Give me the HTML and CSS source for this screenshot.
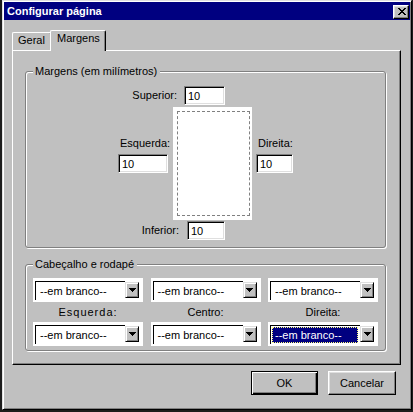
FILE: index.html
```html
<!DOCTYPE html>
<html lang="pt">
<head>
<meta charset="utf-8">
<title>Configurar página</title>
<link rel="stylesheet" href="styles.css">
</head>
<body>
<div class="dialog">
  <div class="titlebar">
    <span class="title">Configurar página</span>
    <span class="close" aria-label="Fechar">
      <svg width="8" height="7" viewBox="0 0 8 7" shape-rendering="crispEdges">
        <path fill="#000" d="M0 0h2v1h-2zM6 0h2v1h-2zM1 1h2v1h-2zM5 1h2v1h-2zM2 2h4v1h-4zM3 3h2v1h-2zM2 4h4v1h-4zM1 5h2v1h-2zM5 5h2v1h-2zM0 6h2v1h-2zM6 6h2v1h-2z"/>
      </svg>
    </span>
  </div>
  <div class="content">
    <div class="tabs">
      <div class="tab">Geral</div>
      <div class="tab active">Margens</div>
    </div>
    <div class="panel">
      <div class="group g1">
        <div class="legend">Margens (em milímetros)</div>
        <div class="row-end r-sup">
          <span class="lbl">Superior:</span>
          <span class="edit w41">10</span>
        </div>
        <div class="middle">
          <div class="side s-left">
            <span class="lbl">Esquerda:</span>
            <span class="edit">10</span>
          </div>
          <div class="page"><div class="page-inner"></div></div>
          <div class="side s-right">
            <span class="lbl">Direita:</span>
            <span class="edit">10</span>
          </div>
        </div>
        <div class="row-end r-inf">
          <span class="lbl">Inferior:</span>
          <span class="edit w38">10</span>
        </div>
      </div>
      <div class="group g2">
        <div class="legend">Cabeçalho e rodapé</div>
        <div class="combos">
          <div class="combo"><span class="field"><span class="val">--em branco--</span></span><span class="arrow"><svg width="7" height="4" viewBox="0 0 7 4" shape-rendering="crispEdges"><path fill="#000" d="M0 0h7v1h-7zM1 1h5v1h-5zM2 2h3v1h-3zM3 3h1v1h-1z"/></svg></span></div>
          <div class="combo"><span class="field"><span class="val">--em branco--</span></span><span class="arrow"><svg width="7" height="4" viewBox="0 0 7 4" shape-rendering="crispEdges"><path fill="#000" d="M0 0h7v1h-7zM1 1h5v1h-5zM2 2h3v1h-3zM3 3h1v1h-1z"/></svg></span></div>
          <div class="combo"><span class="field"><span class="val">--em branco--</span></span><span class="arrow"><svg width="7" height="4" viewBox="0 0 7 4" shape-rendering="crispEdges"><path fill="#000" d="M0 0h7v1h-7zM1 1h5v1h-5zM2 2h3v1h-3zM3 3h1v1h-1z"/></svg></span></div>
          <div class="clabel spaced">Esquerda:</div>
          <div class="clabel">Centro:</div>
          <div class="clabel">Direita:</div>
          <div class="combo"><span class="field"><span class="val">--em branco--</span></span><span class="arrow"><svg width="7" height="4" viewBox="0 0 7 4" shape-rendering="crispEdges"><path fill="#000" d="M0 0h7v1h-7zM1 1h5v1h-5zM2 2h3v1h-3zM3 3h1v1h-1z"/></svg></span></div>
          <div class="combo"><span class="field"><span class="val">--em branco--</span></span><span class="arrow"><svg width="7" height="4" viewBox="0 0 7 4" shape-rendering="crispEdges"><path fill="#000" d="M0 0h7v1h-7zM1 1h5v1h-5zM2 2h3v1h-3zM3 3h1v1h-1z"/></svg></span></div>
          <div class="combo focused"><span class="field"><span class="val sel">--em branco--</span></span><span class="arrow"><svg width="7" height="4" viewBox="0 0 7 4" shape-rendering="crispEdges"><path fill="#000" d="M0 0h7v1h-7zM1 1h5v1h-5zM2 2h3v1h-3zM3 3h1v1h-1z"/></svg></span></div>
        </div>
      </div>
    </div>
    <div class="buttons">
      <span class="btn default">OK</span>
      <span class="btn cancel">Cancelar</span>
    </div>
  </div>
</div>
</body>
</html>
```

FILE: styles.css
```css
* { box-sizing: border-box; }
html, body { margin: 0; padding: 0; }
body {
  background: #1c1c1c;
  width: 413px;
  height: 412px;
  overflow: hidden;
  font-family: "Liberation Sans", Arial, sans-serif;
  font-size: 11px;
  color: #000;
}
.dialog {
  margin-left: 2px;
  width: 410px;
  height: 410px;
  background: #c0c0c0;
  border: 1px solid;
  border-color: #dfdfdf #000 #000 #dfdfdf;
  box-shadow: inset 1px 1px 0 #fff, inset -1px -1px 0 #808080;
  padding: 1px;
  display: flex;
  flex-direction: column;
}
.titlebar {
  height: 18px;
  background: #000080;
  color: #fff;
  display: flex;
  align-items: center;
  justify-content: space-between;
  padding: 0 1px 0 3px;
}
.title { font-weight: bold; font-size: 11px; line-height: 13px; }
.close {
  width: 16px;
  height: 14px;
  margin-top: 1px;
  background: #c0c0c0;
  border: 1px solid;
  border-color: #fff #000 #000 #fff;
  box-shadow: inset -1px -1px 0 #808080, inset 1px 1px 0 #dfdfdf;
  display: flex;
  align-items: center;
  justify-content: center;
  padding-left: 1px;
}
.close svg { display: block; }
.content {
  flex: 1;
  padding: 10px 9px 0 8px;
  display: flex;
  flex-direction: column;
}
.tabs {
  height: 20px;
  display: flex;
  align-items: flex-end;
}
.tab {
  height: 18px;
  width: 40px;
  padding: 1px 0 0 5px;
  line-height: 13px;
  border-top: 1px solid #fff;
  border-left: 1px solid #fff;
  border-right: 1px solid #000;
  border-top-left-radius: 2px;
  border-top-right-radius: 2px;
  box-shadow: inset -1px 0 0 #808080;
  background: #c0c0c0;
}
.tab.active {
  height: 21px;
  width: 56px;
  margin-left: -2px;
  margin-bottom: -1px;
  padding-left: 6px;
  position: relative;
  z-index: 1;
}
.panel {
  height: 315px;
  border: 1px solid;
  border-color: #fff #000 #000 #fff;
  box-shadow: inset -1px -1px 0 #808080;
  padding: 20px 0 0 12px;
}
.group {
  width: 361px;
  border: 1px solid #808080;
  border-radius: 3px;
  box-shadow: 1px 1px 0 #fff, inset 1px 1px 0 #fff;
}
.g1 { height: 177px; }
.g2 { height: 87px; margin-top: 16px; }
.legend {
  display: table;
  margin: -7px 0 0 7px;
  padding: 0 3px 0 2px;
  line-height: 13px;
  background: #c0c0c0;
}
.row-end {
  width: 199px;
  display: flex;
  justify-content: flex-end;
  align-items: center;
}
.r-sup { margin-top: 8px; }
.r-sup .lbl { margin-right: 7px; }
.r-inf { margin-top: 1px; }
.r-inf .lbl { margin-right: 8px; }
.lbl { line-height: 13px; }
.edit {
  display: block;
  height: 19px;
  background: #fff;
  border: 1px solid;
  border-color: #808080 #fff #fff #808080;
  box-shadow: inset 1px 1px 0 #000, inset -1px -1px 0 #dfdfdf;
  padding: 1px 0 0 3px;
  line-height: 16px;
}
.w41 { width: 41px; }
.w38 { width: 38px; }
.middle {
  margin-top: 2px;
  display: flex;
  align-items: flex-start;
}
.side {
  margin-top: 30px;
  display: flex;
  flex-direction: column;
}
.side .lbl { padding-left: 2px; margin-bottom: 4px; }
.s-left { margin-left: 92px; width: 50px; }
.s-right { margin-left: 4px; width: 37px; }
.page {
  margin-left: 5px;
  width: 79px;
  height: 113px;
  background: #fff;
  padding: 4px 2px 4px 4px;
}
.page-inner {
  width: 100%;
  height: 100%;
  border: 1px dashed #808080;
}
.combos {
  margin: 7px 0 0 7px;
  display: grid;
  grid-template-columns: repeat(3, 110px);
  grid-template-rows: 24px 14px 24px;
  column-gap: 7.5px;
  row-gap: 3px;
}
.combo {
  height: 24px;
  background: #fff;
  padding: 3px 4px 2px 2px;
  display: flex;
}
.field {
  flex: 1;
  border-top: 1px solid #000;
  border-left: 1px solid #000;
  display: flex;
  padding: 1px 2px 1px 1px;
}
.val {
  flex: 1;
  line-height: 16px;
  padding-left: 3px;
}
.val.sel {
  background: #000080;
  color: #fff;
  outline: 1px dotted #ffff80;
  outline-offset: -1px;
}
.arrow {
  width: 14px;
  height: 16px;
  margin-top: 1px;
  background: #c0c0c0;
  border: 1px solid;
  border-color: #dfdfdf #000 #000 #dfdfdf;
  box-shadow: inset 1px 1px 0 #fff, inset -1px -1px 0 #808080;
  display: flex;
  align-items: center;
  justify-content: center;
}
.arrow svg { display: block; }
.clabel {
  text-align: center;
  line-height: 14px;
}
.clabel.spaced { letter-spacing: 1px; }
.buttons {
  margin-top: 6px;
  margin-right: 5px;
  display: flex;
  justify-content: flex-end;
  gap: 10px;
}
.btn {
  height: 24px;
  width: 67px;
  display: flex;
  align-items: center;
  justify-content: center;
  background: #c0c0c0;
  border: 1px solid;
  border-color: #fff #000 #000 #fff;
  box-shadow: inset -1px -1px 0 #808080, inset 1px 1px 0 #dfdfdf;
  line-height: 13px;
}
.btn.default {
  border-color: #000;
  box-shadow: inset 1px 1px 0 #fff, inset -1px -1px 0 #000, inset -2px -2px 0 #808080;
}
.btn.cancel { width: 68px; }
```
